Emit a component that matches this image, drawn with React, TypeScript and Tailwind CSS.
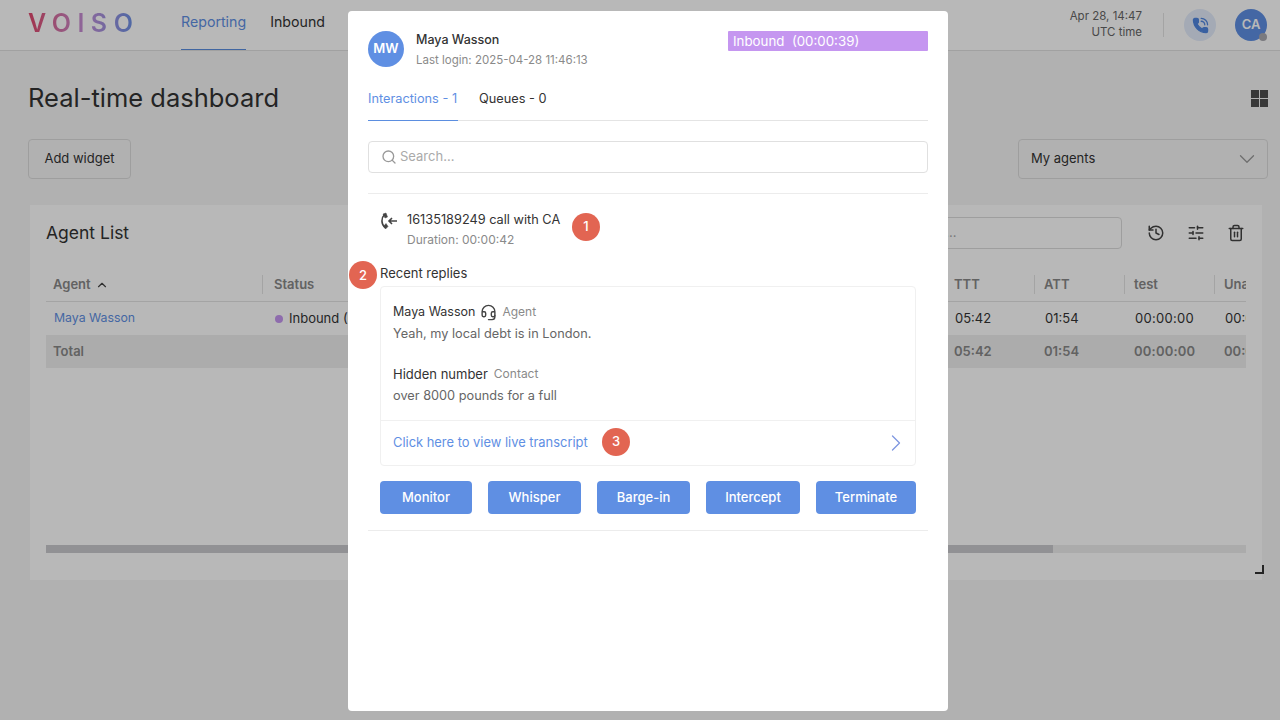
import React from 'react';
import { ChevronDown, ChevronRight, ChevronUp, Headset, History, Search, SlidersHorizontal, Trash2 } from 'lucide-react';

const font = { fontFamily: 'Inter, "Noto Sans", sans-serif' };

const Callout = ({ n, className }: { n: number; className: string }) => (
  <span className={`absolute flex h-7 w-7 items-center justify-center rounded-full bg-[#e26552] text-[13px] font-medium text-white ${className}`}>
    {n}
  </span>
);

const ACTIONS = ['Monitor', 'Whisper', 'Barge-in', 'Intercept', 'Terminate'];

const Dashboard = () => (
  <div className="flex h-[720px] w-[1280px] flex-col overflow-hidden bg-[#f6f6f6] text-[#333]">
    {/* Top bar */}
    <header className="flex h-[51px] shrink-0 items-stretch border-b border-[#e0e0e0] bg-white pl-7 pr-[13px]">
      <div className="mr-[41px] flex w-[112px] items-center overflow-hidden bg-gradient-to-r from-[#e0446a] via-[#c58fd8] to-[#5b8fe6] bg-clip-text pb-1 text-[25px] font-semibold leading-none tracking-[6.5px] text-transparent">
        VOISO
      </div>
      <nav className="flex gap-6 text-[14.2px]">
        <a className="flex items-center border-b border-[#5b8ee0] pb-[6px] text-[#5f8fe3]">Reporting</a>
        <a className="flex items-center pb-[6px]">Inbound</a>
      </nav>
      <div className="ml-auto flex items-center">
        <div className="mb-[2px] text-right text-[11.5px] leading-4 text-[#666]">
          <div>Apr 28, 14:47</div>
          <div>UTC time</div>
        </div>
        <div className="ml-[21px] h-6 w-px bg-[#e4e4e4]" />
        <div className="ml-[20px] flex h-8 w-8 items-center justify-center rounded-full bg-[#e3ecfb] text-[#4f86df]">
          <svg width="17" height="17" viewBox="0 0 24 24" fill="none" stroke="currentColor" strokeWidth="1.8" strokeLinecap="round" strokeLinejoin="round">
            <path d="M13 2a9 9 0 0 1 9 9" />
            <path d="M13 6a5 5 0 0 1 5 5" />
            <path fill="currentColor" d="M13.832 16.568a1 1 0 0 0 1.213-.303l.355-.465A2 2 0 0 1 17 15h3a2 2 0 0 1 2 2v3a2 2 0 0 1-2 2A18 18 0 0 1 2 4a2 2 0 0 1 2-2h3a2 2 0 0 1 2 2v3a2 2 0 0 1-.8 1.6l-.468.351a1 1 0 0 0-.292 1.233 14 14 0 0 0 6.392 6.384" />
          </svg>
        </div>
        <div className="relative ml-[19px] flex h-8 w-8 items-center justify-center rounded-full bg-[#5f8fe3] text-[13px] font-semibold text-white">
          CA
          <span className="absolute bottom-0 right-0 h-2 w-2 rounded-full bg-[#a9a9b0]" />
        </div>
      </div>
    </header>

    <main className="flex flex-1 flex-col pl-7 pr-3">
      <div className="mt-[29px] flex items-center justify-between">
        <h1 className="text-[25.5px] leading-9 text-[#333]">Real-time dashboard</h1>
        <div className="grid grid-cols-2 gap-px">
          <span className="h-2 w-2 bg-[#4f4f4f]" />
          <span className="h-2 w-2 bg-[#4f4f4f]" />
          <span className="h-2 w-2 bg-[#4f4f4f]" />
          <span className="h-2 w-2 bg-[#4f4f4f]" />
        </div>
      </div>

      <div className="mt-[23px] flex items-center justify-between">
        <button className="h-10 w-[103px] rounded border border-[#dcdcdc] text-[13px]">Add widget</button>
        <div className="flex h-10 w-[250px] items-center justify-between rounded border border-[#dcdcdc] pl-3 pr-[7px] text-[13px]">
          My agents
          <ChevronDown size={26} strokeWidth={1.2} className="text-[#999]" />
        </div>
      </div>

      {/* Agent list widget */}
      <section className="ml-[2px] mr-[6px] mt-[26px] flex h-[375px] flex-col bg-white px-4 pt-3">
        <div className="flex h-[32px] items-center">
          <h2 className="text-[17.5px]">Agent List</h2>
          <div className="ml-auto flex h-8 w-[252px] items-center gap-[3px] rounded border border-[#dcdcdc] pl-3 text-[13px] text-[#aaa]">
            <Search size={16} />
            Search...
          </div>
          <div className="ml-[25px] mr-px flex gap-[22px] text-[#444]">
            <History size={18} />
            <SlidersHorizontal size={18} />
            <Trash2 size={18} />
          </div>
        </div>

        <div className="mt-[19px] text-[13px]">
          <div className="flex h-[34px] items-center border-b border-[#e4e4e4] font-semibold text-[#888]">
            <div className="w-[216px] pl-[7px]">
              <span className="inline-flex items-center gap-1">Agent <ChevronUp size={14} className="text-[#444]" /></span>
            </div>
            <div className="flex-1 border-l border-[#e4e4e4] pl-[11px]">Status</div>
            <div className="w-[90px] border-l border-[#e4e4e4] pl-[9px]">TTT</div>
            <div className="w-[90px] border-l border-[#e4e4e4] pl-[9px]">ATT</div>
            <div className="w-[90px] border-l border-[#e4e4e4] pl-[9px]">test</div>
            <div className="w-[32px] overflow-hidden border-l border-[#e4e4e4] pl-[9px]">Una</div>
          </div>
          <div className="flex h-[33px] items-center">
            <div className="w-[216px] pl-2 text-[12.3px] text-[#5f8fe3]">Maya Wasson</div>
            <div className="flex flex-1 items-center gap-[6px] pl-[13px]">
              <span className="h-2 w-2 rounded-full bg-[#c596f0]" />
              Inbound (00:00:39)
            </div>
            <div className="w-[90px] pl-[11px]">05:42</div>
            <div className="w-[90px] pl-[11px]">01:54</div>
            <div className="w-[90px] pl-[11px] tracking-[0.3px]">00:00:00</div>
            <div className="w-[32px] overflow-hidden whitespace-nowrap pl-[11px]">00:00</div>
          </div>
          <div className="flex h-[33px] items-center bg-[#efefef] font-semibold text-[#888]">
            <div className="flex-1 pl-[7px]">Total</div>
            <div className="w-[90px] pl-[10px]">05:42</div>
            <div className="w-[90px] pl-[10px]">01:54</div>
            <div className="w-[90px] pl-[10px] tracking-[0.2px]">00:00:00</div>
            <div className="w-[32px] overflow-hidden whitespace-nowrap pl-[10px]">00:00</div>
          </div>
        </div>

        <div className="mt-[177px] h-2 bg-[#eee]">
          <div className="h-2 w-[1007px] bg-[#c9c9ce]" />
        </div>
        <div className="ml-auto mr-[-18px] mt-[12px] h-[9px] w-[9px] border-b-2 border-r-2 border-[#333]" />
      </section>
    </main>
  </div>
);

const AgentModal = () => (
  <div className="absolute inset-0 flex items-center justify-center bg-black/[.28]">
    <div className="ml-4 mt-[2px] flex h-[700px] w-[600px] flex-col rounded-[4px] bg-white px-5 pt-5 text-[#333]">
      <div className="flex items-start justify-between">
        <div className="flex items-start gap-3">
          <div className="flex h-9 w-9 items-center justify-center rounded-full bg-[#5f8fe3] text-[13px] font-semibold text-white">MW</div>
          <div className="-mt-px">
            <div className="text-[12.5px] font-medium leading-5">Maya Wasson</div>
            <div className="text-[11.5px] leading-5 text-[#8a8a8a]">Last login: 2025-04-28 11:46:13</div>
          </div>
        </div>
        <div className="h-5 w-[200px] whitespace-pre rounded-[1px] bg-[#c596f0] pl-[5px] text-[13.3px] leading-5 text-white">Inbound  (00:00:39)</div>
      </div>

      <div className="mt-[18px] flex h-[33px] gap-[21px] border-b border-[#e4e4e4] text-[12.75px]">
        <a className="h-[33px] w-[90px] border-b border-[#5b8ee0] pt-px text-[#5f8fe3]">Interactions - 1</a>
        <a className="pt-px">Queues - 0</a>
      </div>

      <div className="mt-5 flex h-8 items-center gap-[3px] rounded border border-[#e0e0e0] pl-3 text-[13px] text-[#aaa]">
        <Search size={16} className="text-[#999]" />
        Search...
      </div>

      <div className="mt-5 border-y border-[#ececec] px-3 pb-4">
        <div className="relative mt-[16px] flex items-start gap-[9px]">
          <svg width="18" height="20" viewBox="0 0 18 20" fill="none" stroke="#444" strokeWidth="1.6">
            <path d="M4.5 4.5 C1 8 1 14 5 17.5" />
            <path d="M3 4 L6 3 L7.5 7 L5 8 Z" fill="#444" strokeWidth="0.5" />
            <path d="M3.5 16.5 L6 13.5 L8 16.5 L5.5 19 Z" fill="#444" strokeWidth="0.5" />
            <path d="M17 11 H9 M12 8 L9 11 L12 14" />
          </svg>
          <div>
            <div className="text-[12.75px] leading-5">16135189249 call with CA</div>
            <div className="text-[12px] leading-5 text-[#8a8a8a]">Duration: 00:00:42</div>
          </div>
          <Callout n={1} className="left-[192px] top-[3px]" />
        </div>

        <div className="relative mt-[15px] text-[13px] leading-4">
          Recent replies
          <Callout n={2} className="left-[-31px] top-[-4px]" />
        </div>

        <div className="relative mt-[5px] rounded border border-[#f0f0f0]">
          <div className="px-3 pb-[13px] pt-[14px] text-[12.75px] leading-[22px]">
            <div className="flex items-center gap-[5px] text-[12.5px]">
              Maya Wasson
              <Headset size={17} className="text-[#444]" />
              <span className="text-[12px] text-[#8a8a8a]">Agent</span>
            </div>
            <div className="text-[#666]">Yeah, my local debt is in London.</div>
            <div className="mt-[18px] flex items-center gap-[6px] text-[13px]">
              Hidden number
              <span className="text-[12px] text-[#8a8a8a]">Contact</span>
            </div>
            <div className="text-[#666]">over 8000 pounds for a full</div>
          </div>
          <div className="relative flex h-[45px] items-center justify-between border-t border-[#f0f0f0] pl-3 pr-[5px] text-[12.9px] text-[#5f8fe3]">
            Click here to view live transcript
            <ChevronRight size={28} strokeWidth={1.1} className="text-[#7f97e0]" />
            <Callout n={3} className="left-[221px] top-[7px]" />
          </div>
        </div>

        <div className="mt-[15px] grid grid-cols-[92px_93px_93px_94px_100px] gap-4">
          {ACTIONS.map((a) => (
            <button key={a} className="h-[33px] rounded bg-[#5f8fe3] text-[13px] font-medium text-white">{a}</button>
          ))}
        </div>
      </div>
    </div>
  </div>
);

export default function App() {
  return (
    <div className="relative h-[720px] w-[1280px] overflow-hidden" style={font}>
      <Dashboard />
      <AgentModal />
    </div>
  );
}
